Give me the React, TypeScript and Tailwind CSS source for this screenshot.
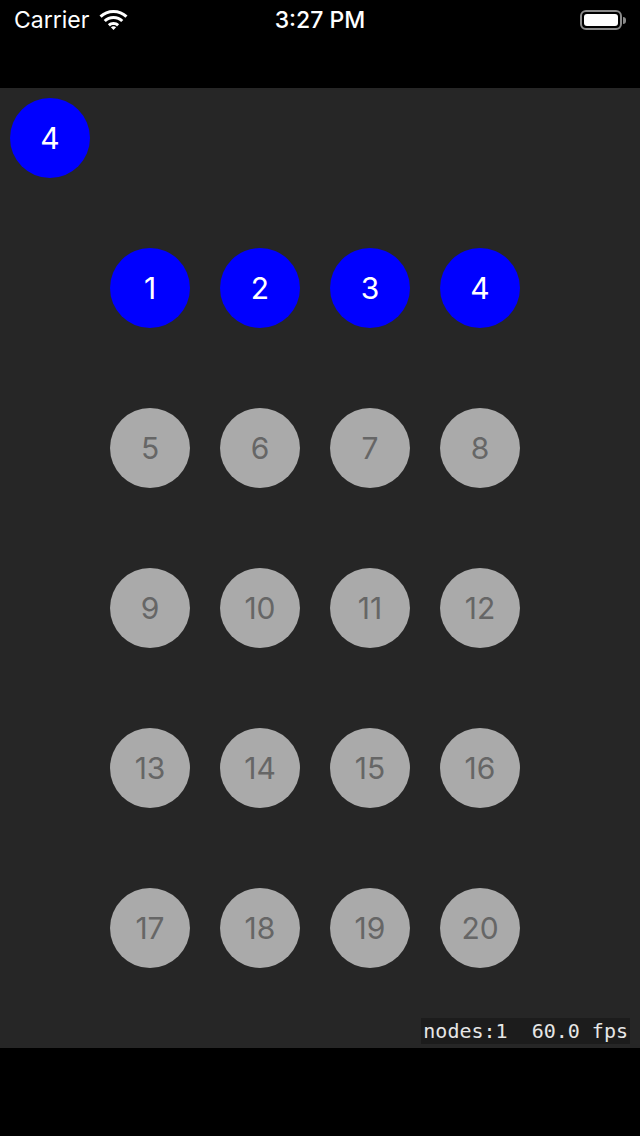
import React from 'react';

const ROWS = [
  [1, 2, 3, 4],
  [5, 6, 7, 8],
  [9, 10, 11, 12],
  [13, 14, 15, 16],
  [17, 18, 19, 20],
];

const Node: React.FC<{ n: number; active?: boolean }> = ({ n, active }) => (
  <div
    className={
      'w-[80px] h-[80px] rounded-full flex items-center justify-center text-[30px] leading-none ' +
      (active ? 'bg-[#0000ff] text-white' : 'bg-[#aaaaaa] text-[#666666]')
    }
  >
    {n}
  </div>
);

const StatusBar: React.FC = () => (
  <div className="h-[40px] relative flex items-center text-white text-[23px]">
    <div className="flex items-center pl-[14px] gap-[9px]">
      <span>Carrier</span>
      <svg width="31" height="22" viewBox="0 0 30 22" fill="white">
        <path d="M15 4c4.6 0 8.8 1.8 11.9 4.7l2.1-2.2C25.3 3 20.4 1 15 1S4.7 3 1 6.5l2.1 2.2C6.2 5.8 10.4 4 15 4z" />
        <path d="M15 10c3 0 5.7 1.2 7.7 3.1l2.1-2.2C22.2 8.5 18.8 7 15 7s-7.2 1.5-9.8 3.9l2.1 2.2C9.3 11.2 12 10 15 10z" />
        <path d="M15 16c1.4 0 2.6.5 3.5 1.4l2.1-2.2C19.1 13.8 17.1 13 15 13s-4.1.8-5.6 2.2l2.1 2.2c.9-.9 2.1-1.4 3.5-1.4z" />
        <path d="M15 21l2.6-2.7c-.7-.6-1.6-1-2.6-1s-1.9.4-2.6 1z" />
      </svg>
    </div>
    <div className="absolute left-0 right-0 text-center font-medium pointer-events-none">3:27 PM</div>
    <div className="ml-auto pr-[14px] flex items-center">
      <div className="w-[42px] h-[20px] rounded-[6px] border-2 border-[#8a8a8a] p-[2px]">
        <div className="w-full h-full rounded-[3px] bg-white" />
      </div>
      <div className="w-[3px] h-[7px] rounded-r-sm bg-[#8a8a8a] ml-[1px]" />
    </div>
  </div>
);

export default function App() {
  return (
    <div className="w-[640px] h-[1136px] bg-black flex flex-col" style={{ fontFamily: 'Inter, Roboto, sans-serif' }}>
      <StatusBar />
      <div className="h-[48px]" />
      <div className="h-[960px] bg-[#262626] relative flex flex-col">
        <div className="absolute left-[10px] top-[10px]">
          <Node n={4} active />
        </div>
        <div className="pt-[160px] pl-[110px] flex flex-col gap-[80px]">
          {ROWS.map((row, i) => (
            <div key={i} className="flex gap-[30px]">
              {row.map((n) => (
                <Node key={n} n={n} active={i === 0} />
              ))}
            </div>
          ))}
        </div>
        <div className="mt-auto mb-[4px] self-end mr-[10px] bg-[#1c1c1c] text-[#e6e6e6] text-[20px] leading-[26px] px-[2px] whitespace-pre" style={{ fontFamily: '"DejaVu Sans Mono", monospace' }}>
          {'nodes:1  60.0 fps'}
        </div>
      </div>
    </div>
  );
}
